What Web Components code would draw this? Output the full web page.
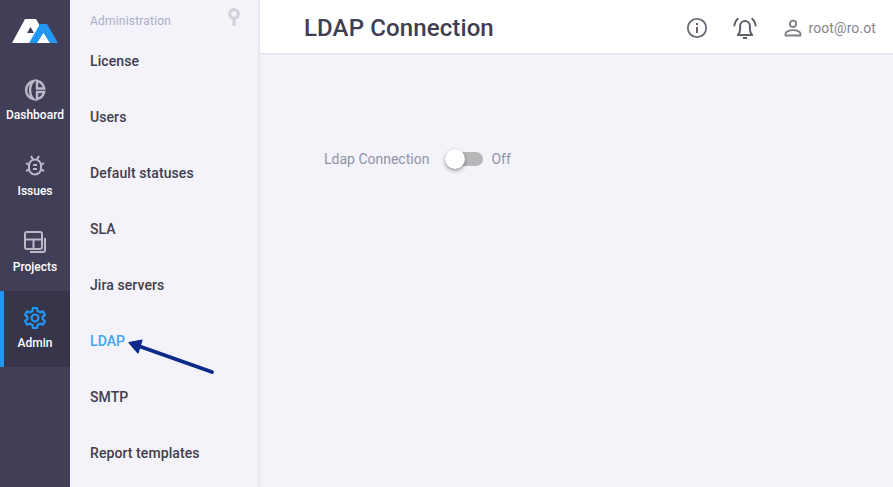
<!DOCTYPE html>
<html><head><meta charset="utf-8">
<style>
html,body{margin:0;padding:0;height:100%;overflow:hidden;background:#f3f3f9;font-family:Roboto,"Liberation Sans",sans-serif}
</style></head><body>
<template id="t-rail-item"><style>
:host{display:flex;flex-direction:column;align-items:center;height:76px;box-sizing:border-box;padding-top:15px;color:#fff;font:500 12px/16px Roboto,sans-serif;position:relative}
:host([active]){background:#363549;color:#fff;border-left:4px solid #2196f3;padding-right:4px}
.i{width:24px;height:24px;margin-bottom:5px;color:#b9b9c9}
:host([active]) .i{color:#2196f3}
::slotted(svg){display:block;width:24px;height:24px}
</style><div class="i"><slot name="icon"></slot></div><slot></slot></template>

<template id="t-rail"><style>
:host{display:flex;flex-direction:column;width:70px;flex:none;background:#403f57}
.logo{height:63px;display:flex;justify-content:center;padding-top:18px;box-sizing:border-box}
</style><div class="logo"><slot name="logo"></slot></div><slot></slot></template>

<template id="t-menu-item"><style>
:host{display:flex;align-items:center;height:56px;flex:none;color:#3e3e50;font:500 14px/16px Roboto,sans-serif;letter-spacing:.08px}
:host([active]){color:#42a5f5}
</style><slot></slot></template>

<template id="t-menu"><style>
:host{display:flex;flex-direction:column;width:188px;flex:none;box-sizing:border-box;padding-left:20px;background:#f3f3f9;position:relative;overflow:hidden}
.h{height:33px;flex:none;box-sizing:border-box;padding-top:13px;font:400 12px/16px Roboto,sans-serif;color:#a9aec8;letter-spacing:.2px}
.pin{position:absolute;left:157px;top:8px;width:14px;height:18px;color:#d2d2db}
</style><div class="h">Administration</div>
<svg class="pin" viewBox="0 0 14 18" fill="none" stroke="currentColor" stroke-width="3.200"><circle cx="7" cy="6" r="4.300"/><path d="M7 10.500v6" stroke-linecap="round"/></svg>
<slot></slot></template>

<template id="t-topbar"><style>
:host{display:flex;align-items:center;height:55px;flex:none;box-sizing:border-box;background:#fff;border-bottom:2px solid #e8e8f0;padding:3px 17px 0 44px}
h1{margin:0;font:500 24px/28px Roboto,sans-serif;color:#3e3e50;flex:1;letter-spacing:.12px}
.icons{display:flex;align-items:center;color:#6f6f7f}
svg{display:block;flex:none}
.u{font:400 14px/16px Roboto,sans-serif;color:#85858f;margin-left:5px;letter-spacing:.1px}
</style><h1><slot></slot></h1><div class="icons">
<svg width="22" height="22" viewBox="0 0 22 22" fill="none" stroke="#6b6b77" stroke-width="1.800" style="margin-right:25px"><circle cx="11" cy="11" r="9.200"/><path d="M11 10v6" stroke-width="2" stroke="#75606a"/><path d="M11 6v2" stroke-width="2" stroke="#75606a"/></svg>
<svg width="24" height="24" viewBox="0 0 24 24" fill="none" stroke="#5f5f6b" stroke-width="2" style="margin-right:26px"><path d="M4.800 19c1.900-1.700 2.300-3.500 2.300-6V9.800a4.900 4.900 0 0 1 9.800 0V13c0 2.500.4 4.300 2.300 6z" stroke-linejoin="round"/><path d="M10 22h4" stroke-width="2"/><path d="M4.800 2.800C2.800 4.500 1.600 6.600 1.300 9.500M19.200 2.800c2 1.700 3.200 3.800 3.500 6.700" stroke-linecap="round"/></svg>
<svg width="20" height="20" viewBox="0 0 20 20" fill="none" stroke="#7d7d89" stroke-width="1.800"><circle cx="10" cy="5.800" r="3.200"/><path d="M2.500 17.500v-1.700c0-2.400 4-3.700 7.500-3.700s7.500 1.300 7.500 3.700v1.700z" stroke-linejoin="round"/></svg>
<span class="u">root@ro.ot</span></div></template>

<template id="t-toggle-row"><style>
:host{display:flex;align-items:center;font:400 14px/16px Roboto,sans-serif;color:#8e94a6}
.l{margin-right:14px}
.sw{position:relative;width:40px;height:20px;margin-right:8px;display:flex;align-items:center}
.track{width:37px;height:14px;margin-left:3px;border-radius:7px;background:#b7b7ba}
.thumb{position:absolute;left:2px;top:0;width:20px;height:20px;border-radius:50%;background:#fff;box-shadow:0 2px 4px rgba(0,0,0,.3),0 1px 2px rgba(0,0,0,.15)}
</style><span class="l"><slot></slot></span><span class="sw"><span class="track"></span><span class="thumb"></span></span><span>Off</span></template>

<template id="t-app"><style>
:host{display:flex;width:893px;height:487px;overflow:hidden;position:relative}
.line{width:2px;flex:none;background:#e8e8f0}
.main{flex:1;display:flex;flex-direction:column;min-width:0}
.body{flex:1;padding:94px 64px 0}
.arrow{position:absolute;left:125px;top:335px;width:95px;height:45px}
</style><slot name="rail"></slot><slot name="menu"></slot><div class="line"></div><div class="main"><slot name="top"></slot><div class="body"><slot></slot></div></div>
<svg class="arrow" viewBox="125 335 95 45"><path d="M212 372 140 346.500" stroke="#0b2a8a" stroke-width="3.800" stroke-linecap="round" fill="none"/><path d="M129 342.500 142 340 138 353z" fill="#0b2a8a" stroke="#0b2a8a" stroke-width="1.200" stroke-linejoin="round"/></svg></template>

<x-app>
<x-rail slot="rail">
<svg slot="logo" width="46" height="26" viewBox="0 0 46 26"><path fill-rule="evenodd" d="M0 25 13 1h11l14 24zM15 15h7l-3.500-6z" fill="#fff"/><path d="M17 25 28 6h7l11 19h-8l-6.500-10L25 25z" fill="#2196f3"/></svg>
<x-rail-item><svg slot="icon" viewBox="0 0 24 24" fill="none" stroke="currentColor" stroke-width="2.400"><path d="M10.500 3a9.300 9.300 0 0 0 0 18.200c-2-1.800-3.400-4.500-3.400-9.100S8.500 4.800 10.500 3z"/><path d="M14 3a9.300 9.300 0 0 1 7.200 7.500h-7.200zM14 14h7.200A9.300 9.300 0 0 1 14 21z"/></svg>Dashboard</x-rail-item>
<x-rail-item><svg slot="icon" viewBox="0 0 24 24" fill="none" stroke="currentColor" stroke-width="2"><rect x="6" y="5.500" width="12" height="15" rx="6"/><path d="M8 2l2 3.500M16 2l-2 3.500M3 9l3 2M21 9l-3 2M3 17l3-1.500M21 17l-3-1.500M10 11h4M10 15h4"/></svg>Issues</x-rail-item>
<x-rail-item><svg slot="icon" viewBox="0 0 24 24" fill="none" stroke="currentColor" stroke-width="2"><rect x="2" y="2" width="17" height="17" rx="2"/><path d="M2 9.500h17M10.500 9.500V19M22 8v12a2 2 0 0 1-2 2H7"/></svg>Projects</x-rail-item>
<x-rail-item active><svg slot="icon" viewBox="0 0 24 24" fill="none" stroke="currentColor" stroke-width="2.200" stroke-linejoin="round"><circle cx="12" cy="12" r="3.500"/><path d="M10 2h4l.6 3 2.400 1.400 2.900-1 2 3.400-2.300 2v2.400l2.300 2-2 3.400-2.900-1-2.400 1.400-.6 3h-4l-.6-3L7 17.600l-2.900 1-2-3.400 2.300-2v-2.400l-2.300-2 2-3.400 2.900 1L9.400 5z"/></svg>Admin</x-rail-item>
</x-rail>
<x-menu slot="menu">
<x-menu-item>License</x-menu-item>
<x-menu-item>Users</x-menu-item>
<x-menu-item>Default statuses</x-menu-item>
<x-menu-item>SLA</x-menu-item>
<x-menu-item>Jira servers</x-menu-item>
<x-menu-item active>LDAP</x-menu-item>
<x-menu-item>SMTP</x-menu-item>
<x-menu-item>Report templates</x-menu-item>
</x-menu>
<x-topbar slot="top">LDAP Connection</x-topbar>
<x-toggle-row>Ldap Connection</x-toggle-row>
</x-app>
<script>
const def=(n,t)=>customElements.define(n,class extends HTMLElement{constructor(){super();this.attachShadow({mode:'open'}).appendChild(document.getElementById(t).content.cloneNode(true))}});
[['x-app','t-app'],['x-rail','t-rail'],['x-rail-item','t-rail-item'],['x-menu','t-menu'],['x-menu-item','t-menu-item'],['x-topbar','t-topbar'],['x-toggle-row','t-toggle-row']].forEach(a=>def(...a));
</script>
</body></html>
